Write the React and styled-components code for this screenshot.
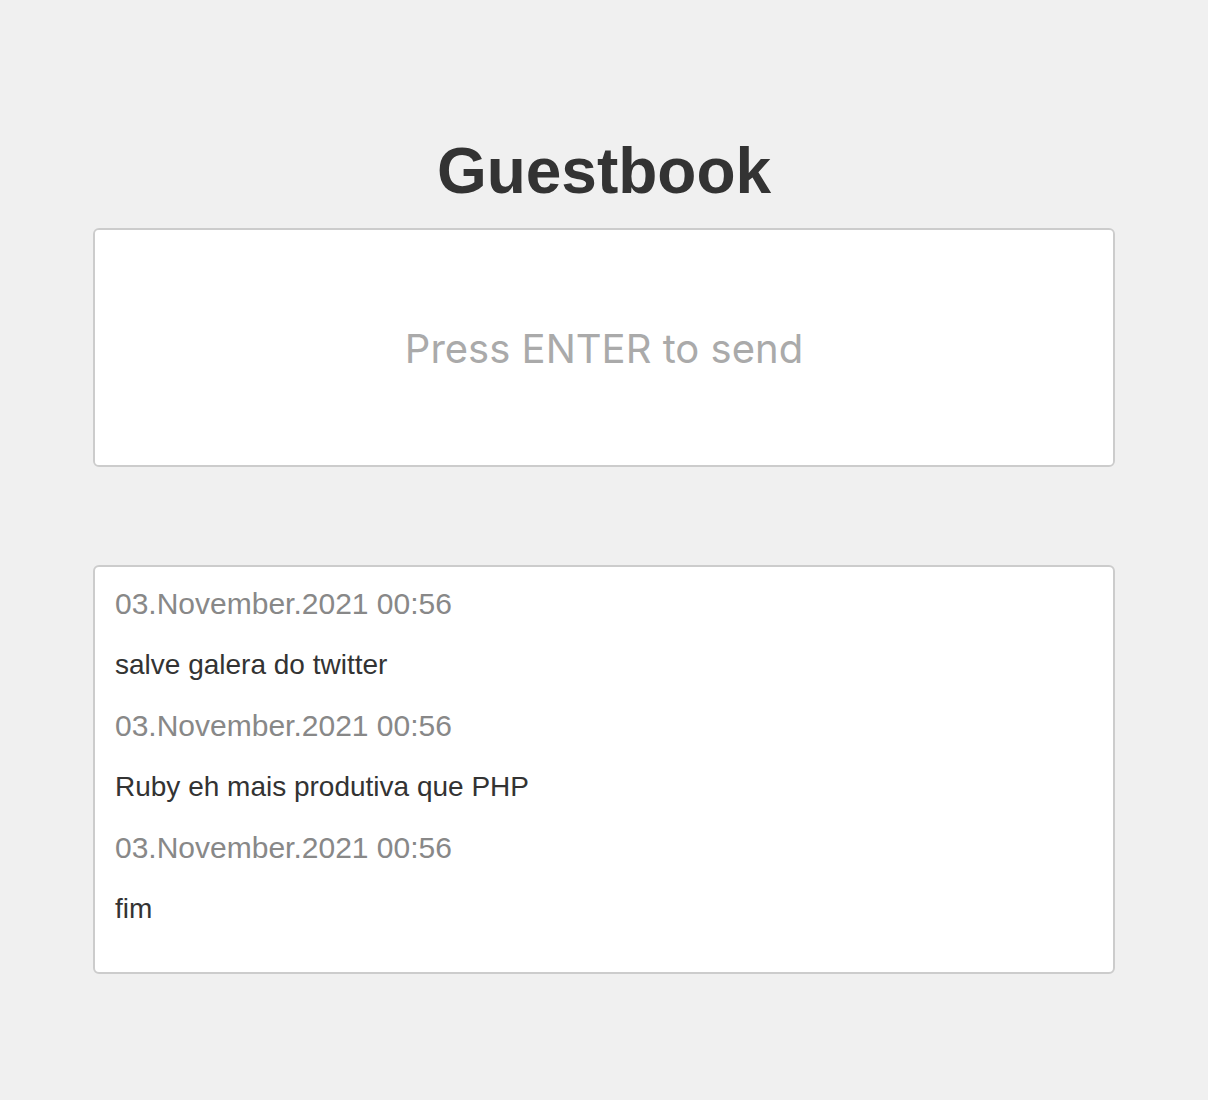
import React from "react";
import styled, { createGlobalStyle } from "styled-components";

const Global = createGlobalStyle`
  html, body { margin: 0; padding: 0; background: #f0f0f0; }
  body { font-family: "Liberation Sans", Arial, sans-serif; color: #333; }
`;

const Page = styled.main`
  width: 1022px;
  margin: 0 auto;
  padding: 130px 0 127px;
  display: flex;
  flex-direction: column;
`;

const Title = styled.h1`
  margin: 0 0 16px;
  text-align: center;
  font-size: 64px;
  line-height: 82px;
  font-weight: 700;
  color: #333;
`;

const Input = styled.textarea`
  box-sizing: border-box;
  width: 100%;
  height: 239px;
  border: 2px solid #ccc;
  border-radius: 6px;
  background: #fff;
  resize: none;
  padding: 95px 20px;
  text-align: center;
  font-family: Inter, "Noto Sans", sans-serif;
  font-size: 40px;
  line-height: 48px;
  color: #333;
  outline: none;
  &::placeholder { color: #aaa; }
`;

const List = styled.section`
  box-sizing: border-box;
  margin-top: 98px;
  border: 2px solid #ccc;
  border-radius: 6px;
  background: #fff;
  padding: 21px 20px 47px;
  display: flex;
  flex-direction: column;
  gap: 29px;
`;

const Line = styled.p`
  margin: 0;
  font-size: ${(p) => (p.$date ? "30px" : "28px")};
  line-height: 32px;
  color: ${(p) => (p.$date ? "#888" : "#333")};
`;

const messages = [
  { date: "03.November.2021 00:56", text: "salve galera do twitter" },
  { date: "03.November.2021 00:56", text: "Ruby eh mais produtiva que PHP" },
  { date: "03.November.2021 00:56", text: "fim" },
];

export default function App() {
  return (
    <>
      <Global />
      <Page>
        <Title>Guestbook</Title>
        <Input placeholder="Press ENTER to send" />
        <List>
          {messages.map((m, i) => (
            <React.Fragment key={i}>
              <Line $date>{m.date}</Line>
              <Line>{m.text}</Line>
            </React.Fragment>
          ))}
        </List>
      </Page>
    </>
  );
}
